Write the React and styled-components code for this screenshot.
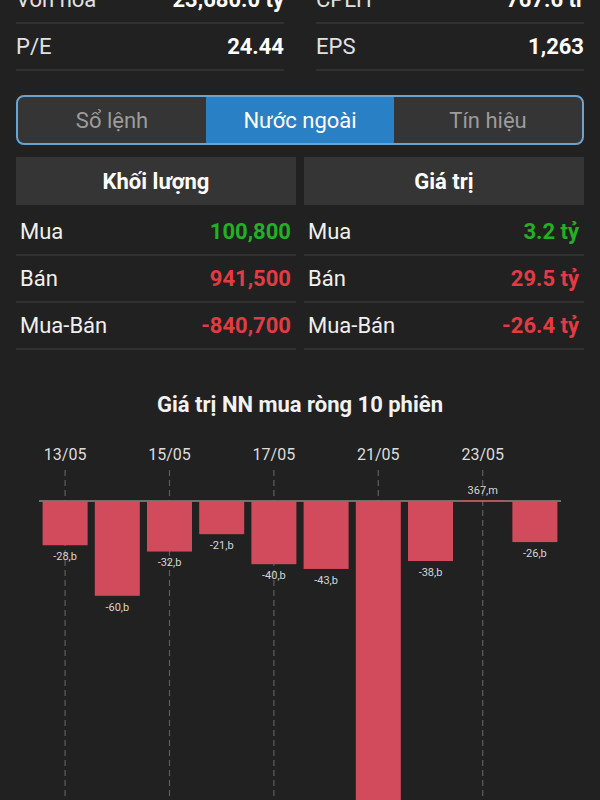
import React from "react";
import styled, { createGlobalStyle } from "styled-components";

const Global = createGlobalStyle`
  html, body { margin: 0; padding: 0; background: #212121; }
  body { font-family: Roboto, "Noto Sans", sans-serif; color: #fff; overflow: hidden; }
`;

const Page = styled.div`
  width: 600px;
  height: 800px;
  overflow: hidden;
  background: #212121;
  box-sizing: border-box;
  padding: 0 16px;
`;

const StatGrid = styled.div`
  display: grid;
  grid-template-columns: 1fr 1fr;
  column-gap: 32px;
  margin-top: -23px;
`;

const StatRow = styled.div`
  display: flex;
  justify-content: space-between;
  align-items: center;
  height: 45px;
  border-bottom: 2px solid #313131;
  font-size: 22px;
`;

const StatLabel = styled.span`
  color: #e2e2e2;
`;

const StatValue = styled.span`
  color: #fff;
  font-weight: 700;
`;

const Tabs = styled.div`
  margin-top: 24px;
  height: 50px;
  display: grid;
  grid-template-columns: repeat(3, 1fr);
  border: 2px solid #6aa3cf;
  border-radius: 8px;
  overflow: hidden;
  box-sizing: border-box;
  background: #353535;
`;

const Tab = styled.div`
  display: flex;
  align-items: center;
  justify-content: center;
  font-size: 22px;
  color: ${(p) => (p.$active ? "#ffffff" : "#9c9c9c")};
  background: ${(p) => (p.$active ? "#2a80c4" : "transparent")};
`;

const Tables = styled.div`
  margin-top: 12px;
  display: grid;
  grid-template-columns: 1fr 1fr;
  column-gap: 8px;
`;

const Col = styled.div`
  display: flex;
  flex-direction: column;
`;

const Header = styled.div`
  height: 48px;
  background: #353535;
  display: flex;
  align-items: center;
  justify-content: center;
  font-weight: 700;
  font-size: 22px;
  color: #fff;
  margin-bottom: 4px;
`;

const DataRow = styled.div`
  height: 45px;
  display: flex;
  align-items: center;
  justify-content: space-between;
  padding: 0 5px 0 4px;
  border-bottom: 2px solid #313131;
  font-size: 22px;
`;

const DataLabel = styled.span`
  color: #f0f0f0;
`;

const DataValue = styled.span`
  font-weight: 700;
  color: ${(p) => (p.$tone === "up" ? "#22b024" : "#e33b44")};
`;

const ChartTitle = styled.div`
  margin-top: 42px;
  text-align: center;
  font-weight: 700;
  font-size: 22px;
  line-height: 26px;
  color: #f2f2f2;
`;

const ChartSvg = styled.svg`
  display: block;
  margin: 12px -16px 0;
`;

const topStats = [
  [["Vốn hóa", "23,680.0 tỷ"], ["P/E", "24.44"]],
  [["CPLH", "767.6 tr"], ["EPS", "1,263"]],
];

const tables = [
  {
    title: "Khối lượng",
    rows: [
      ["Mua", "100,800", "up"],
      ["Bán", "941,500", "down"],
      ["Mua-Bán", "-840,700", "down"],
    ],
  },
  {
    title: "Giá trị",
    rows: [
      ["Mua", "3.2 tỷ", "up"],
      ["Bán", "29.5 tỷ", "down"],
      ["Mua-Bán", "-26.4 tỷ", "down"],
    ],
  },
];

const bars = [
  { v: -28, label: "-28,b", date: "13/05" },
  { v: -60, label: "-60,b" },
  { v: -32, label: "-32,b", date: "15/05" },
  { v: -21, label: "-21,b" },
  { v: -40, label: "-40,b", date: "17/05" },
  { v: -43, label: "-43,b" },
  { v: -260, label: "-260,b", date: "21/05" },
  { v: -38, label: "-38,b" },
  { v: 0.367, label: "367,m", date: "23/05" },
  { v: -26, label: "-26,b" },
];

function Chart() {
  const x0 = 39;
  const step = 52.2;
  const zeroY = 71;
  const scale = 1.58;
  const bw = 45;
  return (
    <ChartSvg width="600" height="370" viewBox="0 0 600 370">
      {bars.map((b, i) => {
        const cx = x0 + step * (i + 0.5);
        return b.date ? (
          <g key={"d" + i}>
            <text x={cx} y={26} fill="#dcdcdc" fontSize="16" textAnchor="middle" dominantBaseline="middle" fontFamily="Roboto, sans-serif">
              {b.date}
            </text>
            <line x1={cx} y1={40} x2={cx} y2={370} stroke="#5e5e5e" strokeWidth="1.2" strokeDasharray="6 4" />
          </g>
        ) : null;
      })}
      <line x1={x0} y1={zeroY} x2={561} y2={zeroY} stroke="#8a8a86" strokeWidth="1.5" />
      {bars.map((b, i) => {
        const cx = x0 + step * (i + 0.5);
        const h = Math.abs(b.v) * scale;
        if (b.v >= 0) {
          return (
            <g key={"b" + i}>
              <rect x={cx - bw / 2} y={zeroY - h} width={bw} height={h} fill="#d24b5c" />
              <text x={cx} y={zeroY - 10} fill="#d6d6d6" fontSize="11" textAnchor="middle" dominantBaseline="middle" fontFamily="Roboto, sans-serif">
                {b.label}
              </text>
            </g>
          );
        }
        return (
          <g key={"b" + i}>
            <rect x={cx - bw / 2} y={zeroY} width={bw} height={h} fill="#d24b5c" />
            <text x={cx} y={zeroY + h + 12} fill="#d6d6d6" fontSize="11" textAnchor="middle" dominantBaseline="middle" fontFamily="Roboto, sans-serif">
              {b.label}
            </text>
          </g>
        );
      })}
    </ChartSvg>
  );
}

export default function App() {
  return (
    <>
      <Global />
      <Page>
        <StatGrid>
          {topStats.map((col, ci) => (
            <Col key={ci}>
              {col.map(([l, v]) => (
                <StatRow key={l}>
                  <StatLabel>{l}</StatLabel>
                  <StatValue>{v}</StatValue>
                </StatRow>
              ))}
            </Col>
          ))}
        </StatGrid>
        <Tabs>
          <Tab>Sổ lệnh</Tab>
          <Tab $active>Nước ngoài</Tab>
          <Tab>Tín hiệu</Tab>
        </Tabs>
        <Tables>
          {tables.map((t) => (
            <Col key={t.title}>
              <Header>{t.title}</Header>
              {t.rows.map(([l, v, tone]) => (
                <DataRow key={l}>
                  <DataLabel>{l}</DataLabel>
                  <DataValue $tone={tone}>{v}</DataValue>
                </DataRow>
              ))}
            </Col>
          ))}
        </Tables>
        <ChartTitle>Giá trị NN mua ròng 10 phiên</ChartTitle>
        <Chart />
      </Page>
    </>
  );
}
